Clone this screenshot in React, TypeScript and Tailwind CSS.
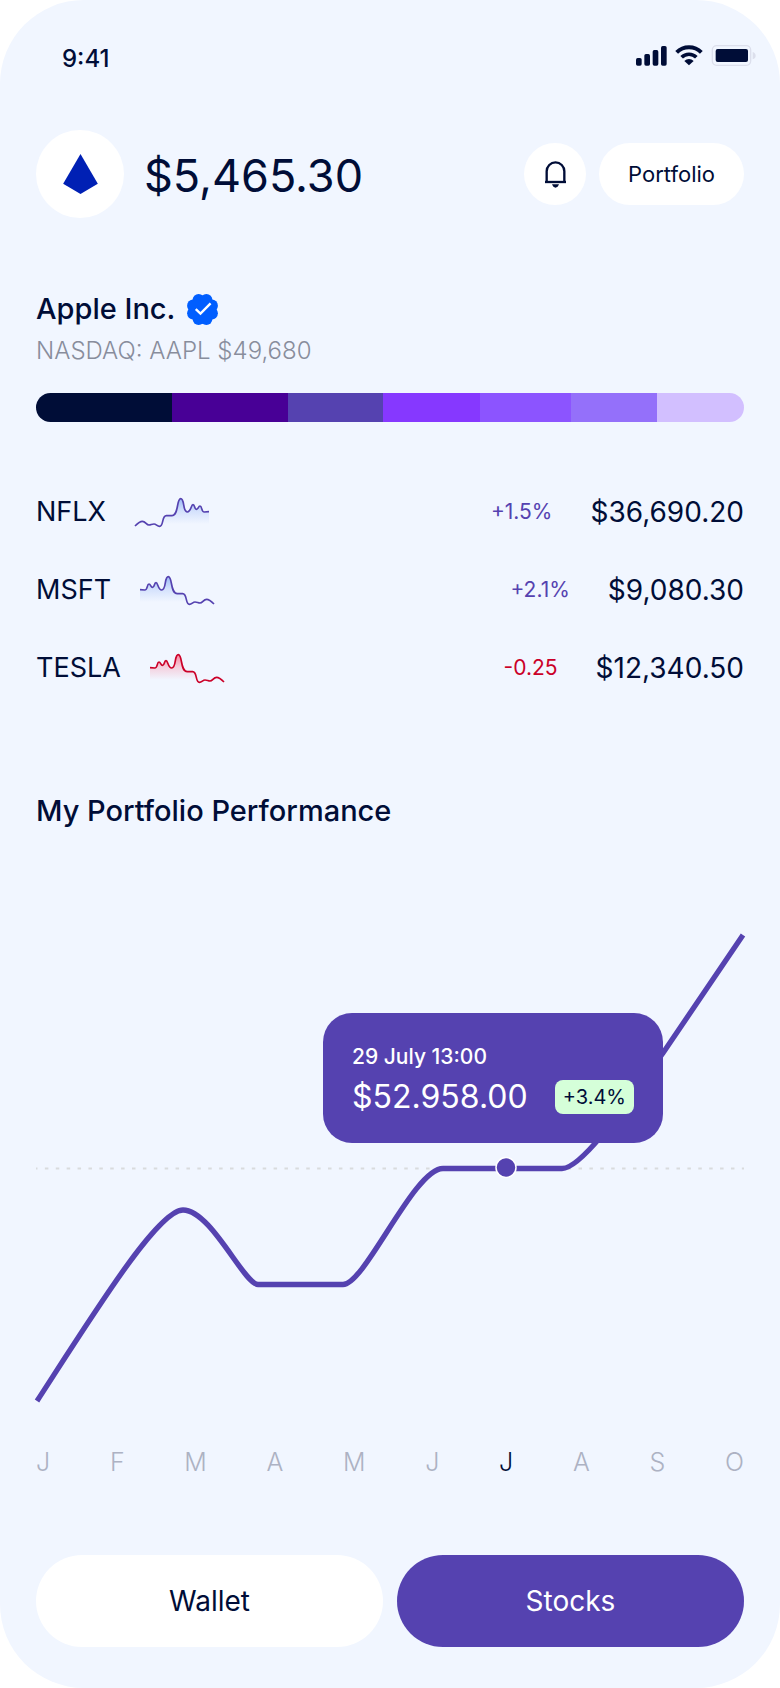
import { useId } from 'react';

// ─────────────────────────────────────────────────────────────────────────────
// Stocks overview: balance header, allocation bar, watchlist with sparklines and
// the yearly performance chart with the selected point's tooltip.
// ─────────────────────────────────────────────────────────────────────────────

interface Holding {
  symbol: string;
  change: string;
  price: string;
  tone: 'up' | 'down';
  /** Sparkline runs high to low instead of low to high. */
  falling: boolean;
}

const HOLDINGS: Holding[] = [
  { symbol: 'NFLX', change: '+1.5%', price: '$36,690.20', tone: 'up', falling: false },
  { symbol: 'MSFT', change: '+2.1%', price: '$9,080.30', tone: 'up', falling: true },
  { symbol: 'TESLA', change: '-0.25', price: '$12,340.50', tone: 'down', falling: true },
];

const ALLOCATION = [
  { share: 136, color: 'bg-[#000d37]' },
  { share: 116, color: 'bg-[#480096]' },
  { share: 95, color: 'bg-[#5542b0]' },
  { share: 97, color: 'bg-[#8638ff]' },
  { share: 91, color: 'bg-[#8c54ff]' },
  { share: 86, color: 'bg-[#9470fa]' },
  { share: 87, color: 'bg-[#d2bfff]' },
];

const MONTHS = ['J', 'F', 'M', 'A', 'M', 'J', 'J', 'A', 'S', 'O'];
const ACTIVE_MONTH = 6;

const CHART = { width: 708, height: 476 };
const TOOLTIP = { x: 287, y: 83 };

const SPARK =
  'M0 84C8 76 14 70 22 70C32 70 34 81 42 81C48 81 50 78 57 78C64 78 66 85 74 85C86 85 80 53 94 53H110C132 53 124 2 137 2C150 2 142 42 157 42C168 42 168 20 174 20C180 20 178 34 184 34C190 34 190 24 195 24C202 24 198 42 208 42L222 41';

const BADGE_LOBES = [0, 1, 2, 3, 4, 5, 6, 7].map((i) => {
  const angle = ((22.5 + i * 45) * Math.PI) / 180;
  return { cx: 46 + 30 * Math.cos(angle), cy: 46 + 30 * Math.sin(angle) };
});

function StatusIcons() {
  return (
    <svg viewBox="0 0 360 63" className="h-[21px] w-[120px]" fill="#000d37" aria-hidden="true">
      <rect x="0" y="39" width="17" height="23" rx="5" />
      <rect x="25" y="27" width="17" height="35" rx="5" />
      <rect x="50" y="15" width="17" height="47" rx="5" />
      <rect x="75" y="3" width="17" height="59" rx="5" />
      <path d="M122 22A53 53 0 0 1 196 22" fill="none" stroke="#000d37" strokeWidth="12" />
      <path d="M137 37A31 31 0 0 1 181 37" fill="none" stroke="#000d37" strokeWidth="11" />
      <path d="M159 61L145 48A20 20 0 0 1 173 48Z" />
      <rect x="229" y="2" width="115" height="59" rx="13" fill="none" stroke="#dcdfec" strokeWidth="4" />
      <rect x="239" y="12" width="97" height="39" rx="6" />
      <path d="M350 21C356 23 359 27 359 32S356 41 350 43Z" fill="#dcdfec" />
    </svg>
  );
}

function BellIcon() {
  return (
    <svg viewBox="0 0 63 81" className="h-[27px] w-[21px]" fill="none" stroke="#000d37" strokeWidth="7" aria-hidden="true">
      <path d="M5 63V31A26.500 27 0 0 1 58 31V63" />
      <path d="M0 63H63" />
      <path d="M21 70H42C40 76 36 80 31.500 80S23 76 21 70Z" fill="#000d37" stroke="none" />
    </svg>
  );
}

function VerifiedBadge() {
  return (
    <svg viewBox="0 0 92 92" className="size-[31px]" fill="#005eff" role="img" aria-label="Verified">
      <circle cx="46" cy="46" r="41" />
      {BADGE_LOBES.map((lobe, i) => (
        <circle key={i} cx={lobe.cx} cy={lobe.cy} r="18" />
      ))}
      <path d="M26 45L40 58L70 28" fill="none" stroke="#fff" strokeWidth="7" />
    </svg>
  );
}

function Sparkline({ tone, falling }: Pick<Holding, 'tone' | 'falling'>) {
  const gradientId = useId();
  const stroke = tone === 'up' ? '#5542b0' : '#cb0028';
  const fill = tone === 'up' ? '#5e8ef0' : '#ff3357';

  return (
    <svg viewBox="0 0 222 87" className="h-[29px] w-[74px] overflow-visible" aria-hidden="true">
      <defs>
        <linearGradient id={gradientId} x1="0" y1="0" x2="0" y2="78" gradientUnits="userSpaceOnUse">
          <stop stopColor={fill} stopOpacity="0.6" />
          <stop offset="0.5" stopColor={fill} stopOpacity="0.2" />
          <stop offset="1" stopColor={fill} stopOpacity="0" />
        </linearGradient>
      </defs>
      <g transform={falling ? 'translate(222 0) scale(-1 1)' : undefined}>
        <path d={`${SPARK}V84Z`} fill={`url(#${gradientId})`} />
        <path d={SPARK} fill="none" stroke={stroke} strokeWidth="5" />
      </g>
    </svg>
  );
}

function HoldingRow({ symbol, change, price, tone, falling }: Holding) {
  return (
    <li className="flex h-9 items-center">
      <span className="text-[27px] leading-9">{symbol}</span>
      <span className="ml-[29px]">
        <Sparkline tone={tone} falling={falling} />
      </span>
      <span className={`ml-auto text-[21px] leading-9 ${tone === 'up' ? 'text-[#5542b0]' : 'text-[#cb0028]'}`}>
        {change}
      </span>
      <span className="ml-[38px] text-[28px] leading-9">{price}</span>
    </li>
  );
}

function PerformanceChart() {
  return (
    <div className="relative mt-[101px]">
      <svg
        viewBox={`0 0 ${CHART.width} ${CHART.height}`}
        className="block w-full overflow-visible"
        fill="none"
        role="img"
        aria-label="Portfolio value from January to October"
      >
        <path d="M0 238.500H708" stroke="#d9dbdd" strokeWidth="2" strokeDasharray="3.500 7.390" strokeDashoffset="2" />
        <path
          d="M1 471C60 380 122 280 147 280C175 280 208 354.500 222 354.500H307C329 354.500 378 238.500 407 238.500H526C548 238.500 600 160 627 123L707 5"
          stroke="#5542b0"
          strokeWidth="5.300"
        />
        <circle cx="470" cy="237.500" r="10" fill="#5542b0" stroke="#fff" strokeWidth="1.500" />
      </svg>

      {/* Tooltip of the selected point */}
      <div
        className="absolute w-[340px] rounded-[29px] bg-[#5542b0] px-[29px] pt-[28px] pb-[26px] text-white"
        style={{
          left: `${(TOOLTIP.x / CHART.width) * 100}%`,
          top: `${(TOOLTIP.y / CHART.height) * 100}%`,
        }}
      >
        <p className="text-[21px] leading-8 font-medium">29 July 13:00</p>
        <div className="mt-1 flex items-center justify-between">
          <span className="text-[32px] leading-10">$52.958.00</span>
          <span className="rounded-lg bg-[#d5ffd9] px-2 text-[20px] leading-[34px] text-[#000d37]">+3.4%</span>
        </div>
      </div>
    </div>
  );
}

export default function App() {
  return (
    <div className="bg-white font-['Inter','Liberation_Sans',sans-serif]">
      <main className="rounded-[84px] bg-[#f1f6ff] px-9 pt-[45px] pb-[41px] text-[#000d37]">
        <div className="-mr-3 flex items-start justify-between pl-[26px]">
          <span className="text-[24px] leading-7 font-medium">9:41</span>
          <StatusIcons />
        </div>

        <header className="mt-[57px] flex items-center">
          <div className="flex size-[88px] items-center justify-center rounded-full bg-white">
            <svg viewBox="0 0 104 120" className="h-[40px] w-[35px]" fill="#0020b4" aria-hidden="true">
              <path d="M52 0L104 89L52 120L0 89Z" />
            </svg>
          </div>
          <h1 className="ml-5 pt-1 text-[45px] leading-[56px]">$5,465.30</h1>
          <button
            type="button"
            aria-label="Notifications"
            className="ml-auto flex size-[62px] items-center justify-center rounded-full bg-white"
          >
            <BellIcon />
          </button>
          <button type="button" className="ml-[13px] h-[62px] rounded-full bg-white px-[29px] text-[22px] leading-8">
            Portfolio
          </button>
        </header>

        <section className="mt-[73px]">
          <div className="flex h-9 items-center gap-3">
            <h2 className="text-[29px] leading-9 font-medium">Apple Inc.</h2>
            <VerifiedBadge />
          </div>
          <p className="mt-2 text-[24px] leading-8 font-light text-[#888d9c]">NASDAQ: AAPL $49,680</p>

          <div className="mt-[26px] flex h-[29px] overflow-hidden rounded-full">
            {ALLOCATION.map(({ share, color }) => (
              <div key={color} className={color} style={{ flexGrow: share }} />
            ))}
          </div>

          <ul className="mt-[72px] flex flex-col gap-[42px]">
            {HOLDINGS.map((holding) => (
              <HoldingRow key={holding.symbol} {...holding} />
            ))}
          </ul>
        </section>

        <section className="mt-[107px]">
          <h2 className="text-[29px] leading-9 font-medium">My Portfolio Performance</h2>
          <PerformanceChart />
          <ol className="mt-10 flex justify-between text-[25px] leading-8 font-light text-[#adb2c3]">
            {MONTHS.map((month, i) => (
              <li key={i} className={i === ACTIVE_MONTH ? 'text-[#000d37]' : undefined}>
                {month}
              </li>
            ))}
          </ol>
        </section>

        <nav className="mt-[77px] grid grid-cols-2 gap-[14px]">
          <button type="button" className="h-[92px] rounded-full bg-white text-[28px] leading-9">
            Wallet
          </button>
          <button type="button" className="h-[92px] rounded-full bg-[#5542b0] text-[28px] leading-9 text-white">
            Stocks
          </button>
        </nav>
      </main>
    </div>
  );
}
